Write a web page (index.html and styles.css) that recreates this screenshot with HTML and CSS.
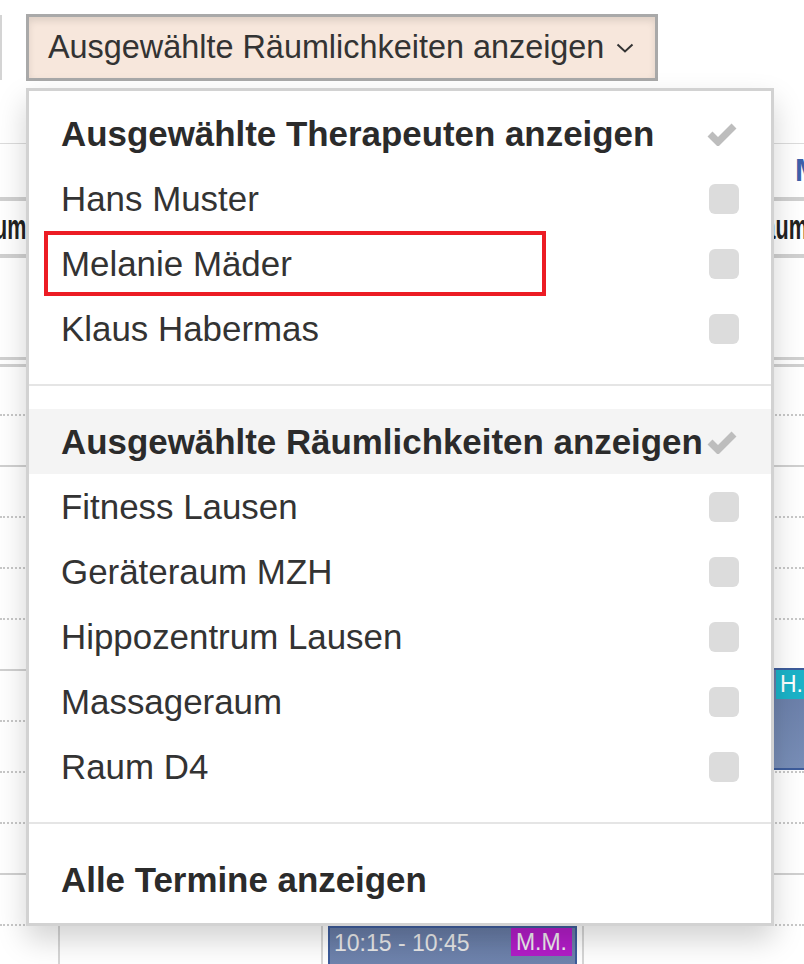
FILE: index.html
```html
<!DOCTYPE html>
<html lang="de">
<head>
<meta charset="utf-8">
<title>Kalender</title>
<link rel="stylesheet" href="styles.css">
</head>
<body>
<div class="toolbar">
  <div class="stub"></div>
  <button class="dd-btn">Ausgewählte Räumlichkeiten anzeigen<svg class="caret" viewBox="0 0 18 10"><polyline points="1.5,1.5 9,8.5 16.5,1.5" fill="none" stroke="#333" stroke-width="2"/></svg></button>
</div>
<div class="calendar">
  <div class="r-top"></div>
  <div class="r-date"><span class="date-label">Mo</span></div>
  <div class="r-res"><div class="res-l"><span>Raum</span></div><div class="res-r"><span>Raum</span></div></div>
  <div class="r-allday"></div>
  <div class="r-gap"></div>
  <div class="slots">
    <div class="slot"><div></div><div></div><div></div><div></div></div>
    <div class="slot hour"><div></div><div></div><div></div><div></div></div>
    <div class="slot"><div></div><div></div><div></div><div></div></div>
    <div class="slot"><div></div><div></div><div></div><div></div></div>
    <div class="slot"><div></div><div></div><div></div><div></div></div>
    <div class="slot hour"><div></div><div></div><div></div><div></div></div>
    <div class="slot"><div></div><div></div><div></div><div></div></div>
    <div class="slot"><div></div><div></div><div></div><div></div></div>
    <div class="slot"><div></div><div></div><div></div><div></div></div>
    <div class="slot hour"><div></div><div></div><div></div><div></div></div>
    <div class="slot"><div></div><div></div><div></div><div></div></div>
    <div class="slot"><div></div><div></div><div></div><div></div></div>
    <div class="ev ev-h"><span class="badge badge-h">H.</span></div>
    <div class="ev ev-m"><span class="time">10:15 - 10:45</span><span class="badge">M.M.</span></div>
  </div>
</div>
<ul class="menu">
  <li class="item head"><span>Ausgewählte Therapeuten anzeigen</span><svg class="check" viewBox="0 0 30 24"><polyline points="3,12 11,20 27,4" fill="none" stroke="#bdbdbd" stroke-width="7"/></svg></li>
  <li class="item"><span>Hans Muster</span><span class="box"></span></li>
  <li class="item"><span>Melanie Mäder</span><span class="box"></span></li>
  <li class="item"><span>Klaus Habermas</span><span class="box"></span></li>
  <li class="divider"></li>
  <li class="item head active"><span>Ausgewählte Räumlichkeiten anzeigen</span><svg class="check" viewBox="0 0 30 24"><polyline points="3,12 11,20 27,4" fill="none" stroke="#bdbdbd" stroke-width="7"/></svg></li>
  <li class="item"><span>Fitness Lausen</span><span class="box"></span></li>
  <li class="item"><span>Geräteraum MZH</span><span class="box"></span></li>
  <li class="item"><span>Hippozentrum Lausen</span><span class="box"></span></li>
  <li class="item"><span>Massageraum</span><span class="box"></span></li>
  <li class="item"><span>Raum D4</span><span class="box"></span></li>
  <li class="divider"></li>
  <li class="item head"><span>Alle Termine anzeigen</span></li>
</ul>
<div class="annot"></div>
</body>
</html>
```

FILE: styles.css
```css
* { box-sizing: border-box; }
html, body { margin: 0; padding: 0; }
html { overflow: hidden; }
body {
  width: 804px;
  height: 964px;
  overflow: hidden;
  position: relative;
  background: #fff;
  font-family: "Liberation Sans", Arial, sans-serif;
}

.toolbar { height: 88px; display: flex; align-items: flex-start; }
.stub { width: 2px; height: 65px; margin-top: 15px; background: #d4d4d4; }
.dd-btn {
  margin: 14px 0 0 24px;
  width: 632px;
  height: 67px;
  border: 3px solid #a9a9a9;
  background: #f7e7dc;
  box-shadow: inset 0 4px 7px rgba(0, 0, 0, 0.1);
  display: flex;
  align-items: center;
  padding: 0 0 0 19px;
  font-family: "Liberation Sans", Arial, sans-serif;
  font-size: 32.4px;
  color: #333;
  white-space: nowrap;
}
.caret { margin-left: 12px; width: 18px; height: 10px; flex-shrink: 0; }

.calendar { overflow: hidden; }
.r-top { height: 56px; border-bottom: 1px solid #dcdcdc; }
.r-date { height: 57px; border-bottom: 4px solid #d0d0d0; display: flex; align-items: center; overflow: hidden; }
.date-label { margin-left: 795px; font-weight: bold; font-size: 30.7px; color: #3e61aa; white-space: nowrap; }
.r-res {
  height: 57px;
  border-bottom: 4px solid #d0d0d0;
  display: flex;
  align-items: center;
  justify-content: space-between;
  font-weight: bold;
  font-size: 34.7px;
  color: #222;
  white-space: nowrap;
  overflow: hidden;
}
.res-l { width: 26px; display: flex; justify-content: flex-end; }
.res-l span { display: inline-block; transform: scaleX(0.62); transform-origin: right center; }
.res-r { width: 56px; }
.res-r span { display: inline-block; transform: scaleX(0.62); transform-origin: left center; }
.r-allday { height: 102px; border-bottom: 3px solid #d0d0d0; }
.r-gap { height: 7px; border-bottom: 3px solid #d0d0d0; }

.slots { position: relative; }
.slot {
  display: grid;
  grid-template-columns: 60px 263px 261px 1fr;
  height: 51px;
  border-bottom: 2px dotted #c8c8c8;
}
.slot:first-child { height: 49px; }
.slot.hour { border-bottom-style: solid; border-bottom-color: #d0d0d0; }
.slot > div { border-right: 2px solid #d6d6d6; }
.slot > div:last-child { border-right: none; }

.ev {
  position: absolute;
  border: 2px solid #3d5c9b;
  background: linear-gradient(#677ba5, #788eb7);
  color: #e8e8e8;
  font-size: 23px;
  display: flex;
  align-items: flex-start;
}
.ev-h { left: 772px; top: 301px; width: 32px; height: 102px; border-right: none; overflow: hidden; }
.ev-m { left: 328px; top: 559px; width: 249px; height: 80px; justify-content: space-between; }
.time { padding: 2px 0 0 4px; }
.badge {
  background: #b21dc7;
  color: #eee;
  padding: 0 5px;
  height: 28px;
  line-height: 28px;
  margin-right: 3px;
}
.badge-h { background: #1bb3c8; margin: 0 0 0 2px; padding: 0 4px; height: 29px; line-height: 29px; color: #fff; white-space: nowrap; }

.menu {
  position: absolute;
  left: 26px;
  top: 88px;
  width: 748px;
  margin: 0;
  padding: 10px 0 11px;
  list-style: none;
  background: #fff;
  border: 3px solid #d2d2d2;
  box-shadow: 0 14px 28px rgba(0, 0, 0, 0.175);
  font-size: 34.9px;
  color: #333;
}
.item {
  display: grid;
  grid-template-columns: minmax(0, 1fr) 30px;
  height: 65px;
  align-items: center;
  padding: 0 32px;
  white-space: nowrap;
}
.item.head { font-weight: bold; color: #2b2b2b; }
.item.active { background: #f4f4f4; }
.box { width: 30px; height: 30px; border-radius: 6px; background: #dcdcdc; justify-self: end; }
.check { width: 30px; height: 24px; justify-self: end; margin-right: 2px; }
.divider { height: 2px; background: #e5e5e5; margin: 23px 0; }

.annot {
  position: absolute;
  left: 44px;
  top: 231px;
  width: 502px;
  height: 65px;
  border: 4.5px solid #ec1c24;
}
```
